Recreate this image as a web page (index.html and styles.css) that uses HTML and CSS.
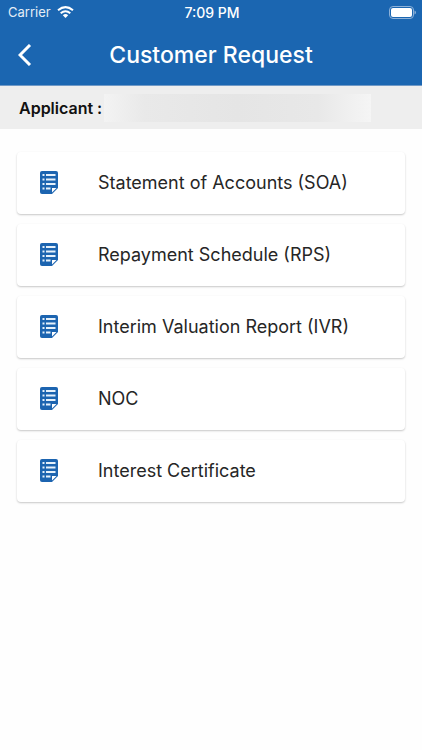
FILE: index.html
```html
<!DOCTYPE html>
<html lang="en">
<head>
    <meta charset="UTF-8">
    <meta name="viewport" content="width=device-width, initial-scale=1.0">
    <title>Customer Request</title>
    <link rel="stylesheet" href="styles.css">
</head>
<body>
    <!-- Icon shared by all request rows -->
    <svg class="sprite" aria-hidden="true">
        <symbol id="document" viewBox="0 0 18 23">
            <path fill="#1c64b0" d="M2 0h14a2 2 0 0 1 2 2v15l-6 6H2a2 2 0 0 1-2-2V2a2 2 0 0 1 2-2z"/>
            <path fill="none" stroke="#e6f1fb" stroke-width="2" d="M6 4H15.500M6 8.500H15.500M6 13H15.500M6 17.500H10.500"/>
            <path fill="none" stroke="#e6f1fb" stroke-width="2" d="M2.500 4H4.500M2.500 8.500H4.500M2.500 13H4.500M2.500 17.500H4.500"/>
            <path fill="#fff" d="M12 21.500V17h4.500z"/>
        </symbol>
    </svg>

    <header class="header">
        <div class="status-bar">
            <div class="carrier">
                <span>Carrier</span>
                <svg width="17" height="12" viewBox="0 0 17 12" aria-hidden="true">
                    <g fill="none" stroke="#fff" stroke-width="2">
                        <path d="M1 4.300Q8.500 -2 16 4.300"/>
                        <path d="M3.700 7.300Q8.500 3.200 13.300 7.300"/>
                    </g>
                    <path fill="#fff" d="M5.800 9.200Q8.500 7 11.200 9.200L8.500 12z"/>
                </svg>
            </div>
            <span class="time">7:09 PM</span>
            <svg class="battery" width="27" height="13" viewBox="0 0 27 13" aria-hidden="true">
                <rect x="0.500" y="0.500" width="24" height="12" rx="3.500" fill="none" stroke="#8db1d8"/>
                <rect x="2" y="2" width="21" height="9" rx="2" fill="#fff"/>
                <path fill="#8db1d8" d="M25.500 4.500q1.500 .5 1.500 2t-1.500 2z"/>
            </svg>
        </div>
        <div class="title-bar">
            <button class="back" type="button" aria-label="Back">
                <svg width="14" height="22" viewBox="0 0 14 22" aria-hidden="true">
                    <path fill="none" stroke="#fff" stroke-width="3" d="M12 1L2 11l10 10"/>
                </svg>
            </button>
            <h1>Customer Request</h1>
        </div>
    </header>

    <div class="applicant">
        <span>Applicant :</span>
        <div class="applicant-name"></div>
    </div>

    <main class="requests">
        <button class="request" type="button">
            <svg class="icon" aria-hidden="true"><use href="#document"/></svg>
            <span>Statement of Accounts (SOA)</span>
        </button>
        <button class="request" type="button">
            <svg class="icon" aria-hidden="true"><use href="#document"/></svg>
            <span>Repayment Schedule (RPS)</span>
        </button>
        <button class="request" type="button">
            <svg class="icon" aria-hidden="true"><use href="#document"/></svg>
            <span>Interim Valuation Report (IVR)</span>
        </button>
        <button class="request" type="button">
            <svg class="icon" aria-hidden="true"><use href="#document"/></svg>
            <span>NOC</span>
        </button>
        <button class="request" type="button">
            <svg class="icon" aria-hidden="true"><use href="#document"/></svg>
            <span>Interest Certificate</span>
        </button>
    </main>
</body>
</html>
```
FILE: styles.css
```css
body {
    font-family: Inter, "Liberation Sans", sans-serif;
    margin: 0;
    background-color: #fefefe;
    color: #262626;
}
.sprite {
    display: none;
}
.header {
    background-color: #1b66b1;
    border-bottom: 1px solid #7099c6;
    color: #fff;
}
.status-bar {
    display: grid;
    grid-template-columns: 1fr auto 1fr;
    align-items: center;
    height: 24px;
    padding: 0 6px 0 8px;
    font-size: 13px;
}
.carrier {
    display: flex;
    align-items: center;
    gap: 6px;
    color: #e4edf6;
}
.time {
    font-size: 14px;
    font-weight: 500;
}
.battery {
    justify-self: end;
}
.title-bar {
    display: grid;
    grid-template-columns: 50px 1fr 50px;
    align-items: center;
    height: 61px;
}
.title-bar h1 {
    margin: 0;
    font-size: 23px;
    font-weight: 500;
    text-align: center;
}
.back {
    display: flex;
    justify-content: center;
    padding: 8px;
    border: none;
    background: none;
    cursor: pointer;
}
.applicant {
    display: flex;
    align-items: center;
    gap: 2px;
    height: 43px;
    padding: 0 51px 0 19px;
    background-color: #eee;
    color: #111;
    font-size: 16px;
    font-weight: 600;
}
/* Name is masked */
.applicant-name {
    flex: 1;
    height: 28px;
    background: linear-gradient(to right, #f3f3f3, #e9e9e9 15%, #e5e5e5 50%, #e8e8e8 80%, #f5f5f5);
}
.requests {
    display: flex;
    flex-direction: column;
    gap: 10px;
    padding: 23px 17px;
}
.request {
    display: flex;
    align-items: center;
    gap: 40px;
    height: 62px;
    padding: 0 23px 2px;
    border: none;
    border-radius: 4px;
    background-color: #fff;
    box-shadow: 0 1px 2px rgba(0, 0, 0, 0.22);
    color: inherit;
    font-family: inherit;
    font-size: 18px;
    text-align: left;
    cursor: pointer;
}
.icon {
    width: 18px;
    height: 23px;
}
```
